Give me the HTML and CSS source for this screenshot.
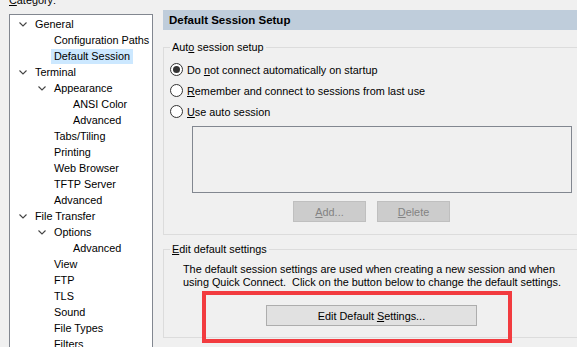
FILE: index.html
```html
<!DOCTYPE html>
<html>
<head>
<meta charset="utf-8">
<link rel="stylesheet" href="styles.css">
</head>
<body>
<div class="page">
  <aside class="left">
    <div class="cat-label"><u>C</u>ategory:</div>
    <ul class="tree">
      <li class="row l1"><span class="tog"><svg width="8" height="5" viewBox="0 0 8 5"><path d="M0.5 0.5 L4 4 L7.5 0.5" fill="none" stroke="#444" stroke-width="1.1"/></svg></span><span class="lbl">General</span></li>
      <li class="row l2"><span class="tog"></span><span class="lbl">Configuration Paths</span></li>
      <li class="row l2"><span class="tog"></span><span class="lbl sel">Default Session</span></li>
      <li class="row l1"><span class="tog"><svg width="8" height="5" viewBox="0 0 8 5"><path d="M0.5 0.5 L4 4 L7.5 0.5" fill="none" stroke="#444" stroke-width="1.1"/></svg></span><span class="lbl">Terminal</span></li>
      <li class="row l2"><span class="tog"><svg width="8" height="5" viewBox="0 0 8 5"><path d="M0.5 0.5 L4 4 L7.5 0.5" fill="none" stroke="#444" stroke-width="1.1"/></svg></span><span class="lbl">Appearance</span></li>
      <li class="row l3"><span class="tog"></span><span class="lbl">ANSI Color</span></li>
      <li class="row l3"><span class="tog"></span><span class="lbl">Advanced</span></li>
      <li class="row l2"><span class="tog"></span><span class="lbl">Tabs/Tiling</span></li>
      <li class="row l2"><span class="tog"></span><span class="lbl">Printing</span></li>
      <li class="row l2"><span class="tog"></span><span class="lbl">Web Browser</span></li>
      <li class="row l2"><span class="tog"></span><span class="lbl">TFTP Server</span></li>
      <li class="row l2"><span class="tog"></span><span class="lbl">Advanced</span></li>
      <li class="row l1"><span class="tog"><svg width="8" height="5" viewBox="0 0 8 5"><path d="M0.5 0.5 L4 4 L7.5 0.5" fill="none" stroke="#444" stroke-width="1.1"/></svg></span><span class="lbl">File Transfer</span></li>
      <li class="row l2"><span class="tog"><svg width="8" height="5" viewBox="0 0 8 5"><path d="M0.5 0.5 L4 4 L7.5 0.5" fill="none" stroke="#444" stroke-width="1.1"/></svg></span><span class="lbl">Options</span></li>
      <li class="row l3"><span class="tog"></span><span class="lbl">Advanced</span></li>
      <li class="row l2"><span class="tog"></span><span class="lbl">View</span></li>
      <li class="row l2"><span class="tog"></span><span class="lbl">FTP</span></li>
      <li class="row l2"><span class="tog"></span><span class="lbl">TLS</span></li>
      <li class="row l2"><span class="tog"></span><span class="lbl">Sound</span></li>
      <li class="row l2"><span class="tog"></span><span class="lbl">File Types</span></li>
      <li class="row l2"><span class="tog"></span><span class="lbl">Filters</span></li>
    </ul>
  </aside>
  <main class="right">
    <div class="hdr">Default Session Setup</div>
    <fieldset class="grp g1">
      <legend>Aut<u>o</u> session setup</legend>
      <div class="radio-row first"><span class="radio checked"></span><span>Do <u>n</u>ot connect automatically on startup</span></div>
      <div class="radio-row"><span class="radio"></span><span><u>R</u>emember and connect to sessions from last use</span></div>
      <div class="radio-row"><span class="radio"></span><span><u>U</u>se auto session</span></div>
      <div class="listbox"></div>
      <div class="btn-row">
        <button class="btn disabled"><u>A</u>dd...</button>
        <button class="btn disabled"><u>D</u>elete</button>
      </div>
    </fieldset>
    <fieldset class="grp g2">
      <legend><u>E</u>dit default settings</legend>
      <p class="desc">The default session settings are used when creating a new session and when<br>using Quick Connect.&nbsp; Click on the button below to change the default settings.</p>
      <div class="edit-wrap">
        <button class="btn edit">Edit Default <u>S</u>ettings...</button>
        <div class="annot"></div>
      </div>
    </fieldset>
  </main>
</div>
</body>
</html>
```

FILE: styles.css
```css
html, body {
  margin: 0;
  padding: 0;
  overflow: hidden;
  background: #f0f0f0;
}
body {
  font-family: "Liberation Sans", Arial, sans-serif;
  font-size: 10.85px;
  color: #000;
  width: 577px;
  height: 347px;
}
u { text-decoration: underline; text-underline-offset: 1px; }

.page {
  display: flex;
  align-items: flex-start;
}

.left {
  flex: none;
  width: 144px;
  margin-left: 9px;
}
.cat-label {
  line-height: 14px;
  height: 14px;
  margin-top: -7px;
  margin-bottom: 7px;
}
.tree {
  list-style: none;
  margin: 0;
  padding: 1px 0 0;
  height: 400px;
  background: #fff;
  border: 1px solid #828790;
}
.row {
  display: flex;
  align-items: center;
  height: 16px;
}
.row.l1 { padding-left: 3px; }
.row.l2 { padding-left: 22px; }
.row.l3 { padding-left: 41px; }
.tog {
  flex: none;
  width: 19px;
  height: 16px;
  display: flex;
  align-items: center;
  padding-left: 6px;
  box-sizing: border-box;
}
.tog svg { display: block; }
.lbl {
  padding: 0 3px;
  line-height: 15px;
  white-space: nowrap;
}
.lbl.sel { background: #cce8ff; }

.right {
  flex: none;
  width: 440px;
  margin-left: 10px;
  margin-top: 10px;
}
.hdr {
  height: 20px;
  line-height: 20px;
  background: #bfcddb;
  font-weight: bold;
  font-size: 11.5px;
  padding-left: 6px;
}
.grp {
  margin: 10px 0 0;
  padding: 0 6px 12px;
  border: 1px solid #dcdcdc;
  min-width: 0;
}
.grp legend {
  padding: 0 2px;
  line-height: 14px;
  font-size: 10.85px;
}
.g2 { margin-top: 7px; padding-bottom: 11px; }

.radio-row {
  display: flex;
  align-items: center;
  height: 21px;
  white-space: nowrap;
}
.radio-row.first { margin-top: 5px; }
.radio {
  flex: none;
  width: 13px;
  height: 13px;
  box-sizing: border-box;
  border: 1px solid #333;
  border-radius: 50%;
  background: #fff;
  margin-right: 4px;
  display: flex;
  align-items: center;
  justify-content: center;
}
.radio.checked::after {
  content: "";
  width: 7px;
  height: 7px;
  border-radius: 50%;
  background: #333;
}
.listbox {
  margin: 4px 0 0 22px;
  width: 380px;
  height: 67px;
  box-sizing: border-box;
  border: 1px solid #828790;
  background: #f0f0f0;
}
.btn-row {
  display: flex;
  gap: 11px;
  margin-top: 8px;
  padding-left: 123px;
}
.btn {
  font-family: inherit;
  font-size: 10.85px;
  height: 21px;
  box-sizing: border-box;
  padding: 0;
  margin: 0;
  color: #000;
  background: #e1e1e1;
  border: 1px solid #adadad;
}
.btn.disabled {
  width: 73px;
  background: #cccccc;
  border-color: #bfbfbf;
  color: #838383;
}
.desc {
  margin: 7px 0 0 13px;
  line-height: 13px;
  white-space: nowrap;
}
.edit-wrap {
  position: relative;
  margin: 16px 0 0 96px;
  width: 211px;
  height: 21px;
}
.btn.edit {
  width: 211px;
  display: block;
}
.annot {
  position: absolute;
  left: -64px;
  top: -14px;
  width: 310px;
  height: 52px;
  box-sizing: border-box;
  border: 4px solid #f23b3f;
  pointer-events: none;
}
```
